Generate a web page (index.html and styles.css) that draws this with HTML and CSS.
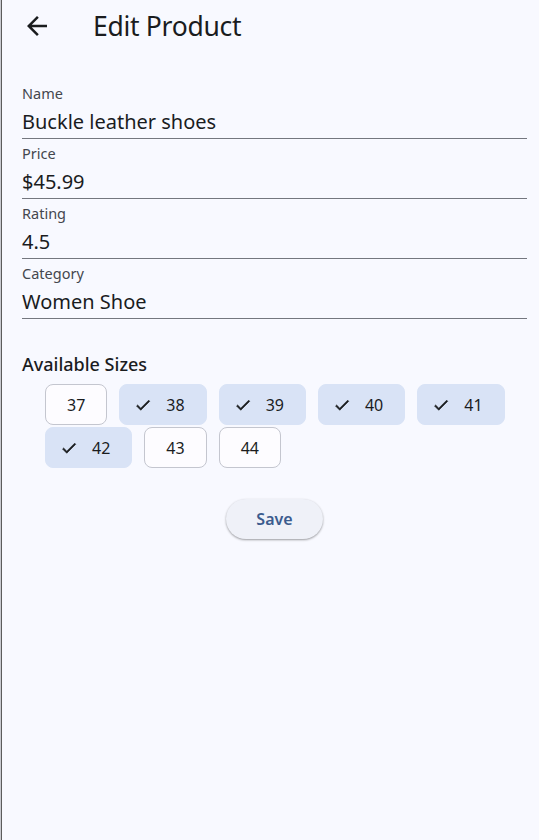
FILE: index.html
```html
<!DOCTYPE html>
<html lang="en">
<head>
<meta charset="utf-8">
<title>Edit Product</title>
<link rel="stylesheet" href="styles.css">
</head>
<body>
<div class="frame">
  <header class="appbar">
    <button class="back" aria-label="Back">
      <svg viewBox="0 0 24 24" width="30" height="30"><path d="M20 11H7.83l5.59-5.59L12 4l-8 8 8 8 1.41-1.41L7.83 13H20v-2z" fill="#1a1c1e"/></svg>
    </button>
    <h1 class="title">Edit Product</h1>
  </header>
  <main class="form">
    <div class="field">
      <div class="label">Name</div>
      <div class="value">Buckle leather shoes</div>
    </div>
    <div class="field">
      <div class="label">Price</div>
      <div class="value">$45.99</div>
    </div>
    <div class="field">
      <div class="label">Rating</div>
      <div class="value">4.5</div>
    </div>
    <div class="field">
      <div class="label">Category</div>
      <div class="value">Women Shoe</div>
    </div>
    <h2 class="section">Available Sizes</h2>
    <div class="chips">
      <span class="chip">37</span>
      <span class="chip selected"><svg class="check" viewBox="0 0 24 24" width="18" height="18"><path d="M9 16.17L4.83 12l-1.42 1.41L9 19 21 7l-1.41-1.41z"/></svg>38</span>
      <span class="chip selected"><svg class="check" viewBox="0 0 24 24" width="18" height="18"><path d="M9 16.17L4.83 12l-1.42 1.41L9 19 21 7l-1.41-1.41z"/></svg>39</span>
      <span class="chip selected"><svg class="check" viewBox="0 0 24 24" width="18" height="18"><path d="M9 16.17L4.83 12l-1.42 1.41L9 19 21 7l-1.41-1.41z"/></svg>40</span>
      <span class="chip selected"><svg class="check" viewBox="0 0 24 24" width="18" height="18"><path d="M9 16.17L4.83 12l-1.42 1.41L9 19 21 7l-1.41-1.41z"/></svg>41</span>
      <span class="chip selected"><svg class="check" viewBox="0 0 24 24" width="18" height="18"><path d="M9 16.17L4.83 12l-1.42 1.41L9 19 21 7l-1.41-1.41z"/></svg>42</span>
      <span class="chip">43</span>
      <span class="chip">44</span>
    </div>
    <div class="actions">
      <button class="save">Save</button>
    </div>
  </main>
</div>
</body>
</html>
```

FILE: styles.css
```css
* { box-sizing: border-box; }
html, body {
  margin: 0;
  padding: 0;
  height: 100%;
  background: #f8f9ff;
}
body {
  font-family: "Noto Sans", "Open Sans", sans-serif;
  color: #1a1c1e;
  border-left: 1px solid #c9cad0;
}
.frame {
  min-height: 100%;
  border-left: 1px solid #5c5c5c;
}
.appbar {
  height: 52px;
  display: flex;
  align-items: center;
}
.back {
  margin-left: 20px;
  width: 30px;
  height: 30px;
  padding: 0;
  border: 0;
  background: none;
  display: flex;
}
.title {
  margin: 0 0 0 41px;
  font-size: 26.5px;
  font-weight: 400;
  line-height: 32px;
  letter-spacing: -0.3px;
  color: #1a1c1e;
}
.form {
  padding: 27px 12px 0 20px;
}
.field {
  height: 60px;
  padding-top: 4px;
  border-bottom: 1px solid #74777f;
}
.label {
  font-size: 14.5px;
  line-height: 20px;
  color: #44474e;
}
.value {
  margin-top: 4px;
  font-size: 20px;
  line-height: 30px;
  color: #1a1c1e;
}
.section {
  margin: 33px 0 8px;
  font-size: 18px;
  font-weight: 500;
  line-height: 24px;
  color: #1a1c1e;
}
.chips {
  display: flex;
  flex-wrap: wrap;
  gap: 2px 12px;
  padding-left: 23px;
}
.chip {
  height: 41px;
  display: inline-flex;
  align-items: center;
  padding: 0 21px;
  border: 1px solid #c4c6cf;
  border-radius: 8px;
  background: #fdfcff;
  font-size: 16px;
  color: #1a1c1e;
}
.chip.selected {
  padding-left: 14px;
  border-color: #d9e3f6;
  background: #d9e3f6;
}
.check {
  margin-right: 14px;
  fill: #1a1c1e;
  stroke: #1a1c1e;
  stroke-width: 0.8;
}
.actions {
  display: flex;
  justify-content: center;
  margin-top: 31px;
}
.save {
  width: 97px;
  height: 40px;
  border: 0;
  border-radius: 20px;
  background: #eff1f8;
  box-shadow: 0 1px 2px rgba(0,0,0,0.28), 0 1px 3px rgba(0,0,0,0.12);
  font-family: "Noto Sans", "Open Sans", sans-serif;
  font-size: 16px;
  font-weight: 600;
  color: #3b5b8e;
}
```
